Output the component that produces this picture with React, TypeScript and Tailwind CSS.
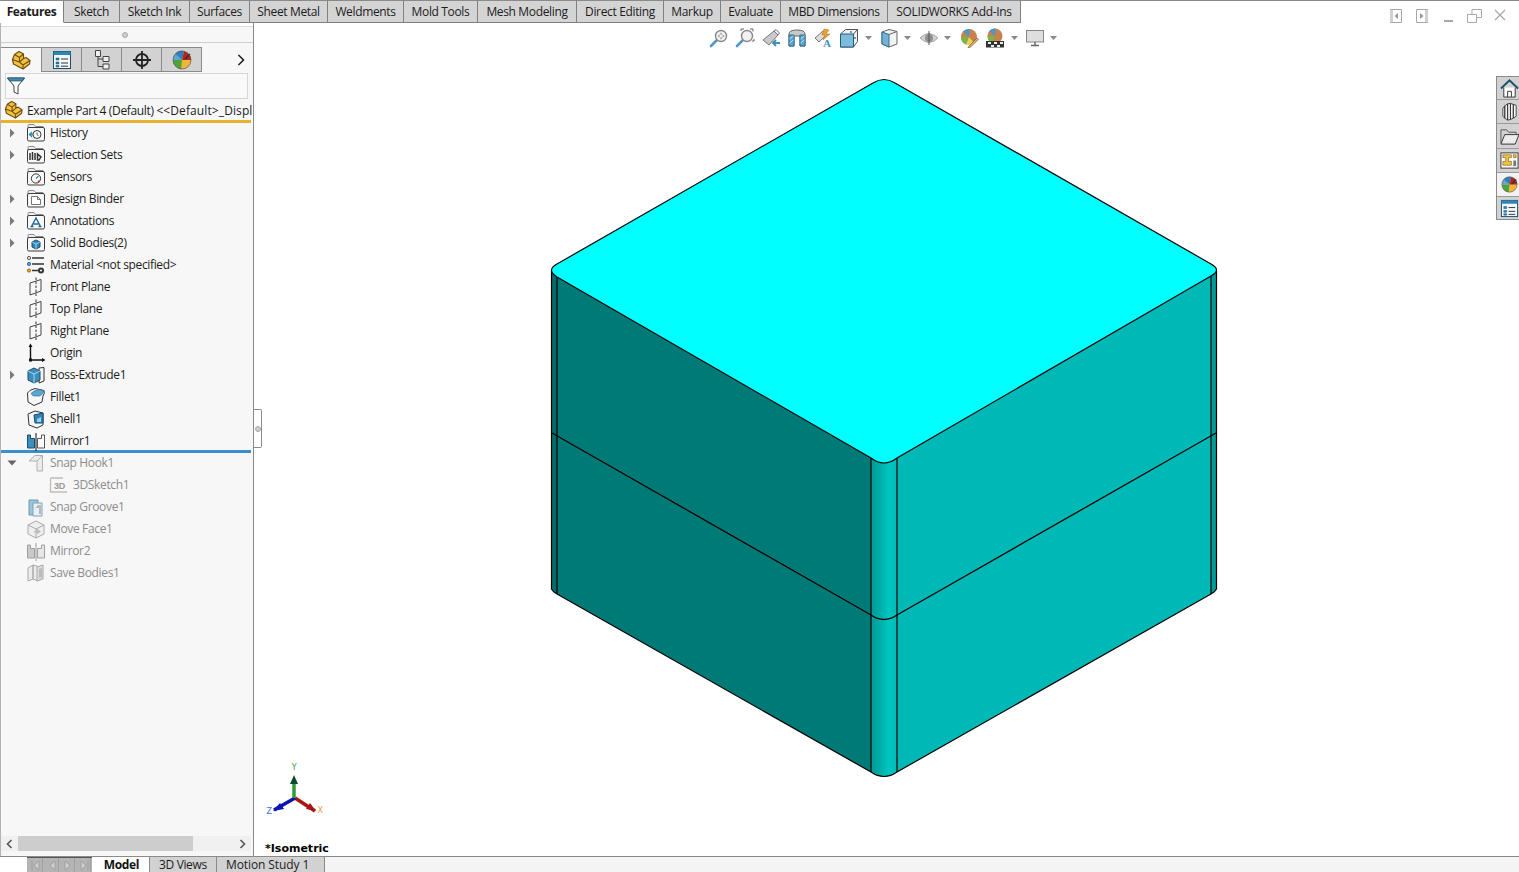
import type { ReactNode } from "react"

const ribbonTabs = [
  { label: "Features", cls: "w-[64px] bg-white font-bold border-b-white" },
  { label: "Sketch", cls: "w-[56px]" },
  { label: "Sketch Ink", cls: "w-[70px]" },
  { label: "Surfaces", cls: "w-[60px]" },
  { label: "Sheet Metal", cls: "w-[78px]" },
  { label: "Weldments", cls: "w-[76px]" },
  { label: "Mold Tools", cls: "w-[74px]" },
  { label: "Mesh Modeling", cls: "w-[99px]" },
  { label: "Direct Editing", cls: "w-[87px]" },
  { label: "Markup", cls: "w-[57px]" },
  { label: "Evaluate", cls: "w-[60px]" },
  { label: "MBD Dimensions", cls: "w-[107px]" },
  { label: "SOLIDWORKS Add-Ins", cls: "w-[133px]" },
]

function Svg({ size = 20, box = 20, children }: { size?: number; box?: number; children: ReactNode }) {
  return (
    <svg width={size} height={size} viewBox={`0 0 ${box} ${box}`} className="shrink-0 block">
      {children}
    </svg>
  )
}

function PartIcon({ size = 20 }: { size?: number }) {
  return (
    <Svg size={size}>
      <path d="M1.5 9.5 L3.5 4.5 L8 1.5 L12.5 4 L12.5 8.5 L15 7.5 L19 10.5 L18.5 14 L12 19 L2.5 14 Z" fill="#f7c23c" stroke="#6b4e12" strokeWidth="1.2" strokeLinejoin="round" />
      <path d="M3.5 4.5 L8.5 7.5 L12.5 4 M8.5 7.5 L8.5 12 M1.5 9.5 L8.5 12 L12.5 8.5 M8.5 12 L12 15 L19 10.5 M12 15 L12 19" fill="none" stroke="#6b4e12" strokeWidth="1.1" />
    </Svg>
  )
}

function Ball({ size = 20 }: { size?: number }) {
  return (
    <Svg size={size}>
      <circle cx="10" cy="10" r="9" fill="#f0b63a" />
      <path d="M10 10 L3 4 A9 9 0 0 1 12 1.2 Z" fill="#2f7fc4" />
      <path d="M10 10 L12 1.2 A9 9 0 0 1 19 10 Z" fill="#b5241c" />
      <path d="M10 10 L1 10 A9 9 0 0 0 9 19 Z" fill="#4ea33a" />
      <path d="M10 10 L3 4 A9 9 0 0 0 1 10 Z" fill="#5da6d8" />
      <path d="M13 9 L18 4" stroke="#333" strokeWidth="1.6" />
      <circle cx="10" cy="10" r="9" fill="none" stroke="#555" strokeWidth="0.7" />
    </Svg>
  )
}

function ListWindow({ size = 20 }: { size?: number }) {
  return (
    <Svg size={size}>
      <rect x="1.5" y="1.5" width="17" height="17" fill="#f4f8fb" stroke="#174f6e" />
      <rect x="1.5" y="1.5" width="17" height="3.5" fill="#2d87b5" />
      <path d="M4 8h3v2h-3z M4 12h3v2h-3z M4 15.5h3v1.5h-3z" fill="#2d87b5" stroke="#174f6e" strokeWidth="0.5" />
      <path d="M9 9h7 M9 13h7 M9 16.2h7" stroke="#333" />
    </Svg>
  )
}

function ConfigIcon() {
  return (
    <Svg>
      <path d="M3.5 0.5h5v6h-5z M11 6.5h6v5h-6z M11 14h6v5h-6z" fill="#efefef" stroke="#444" />
      <path d="M6 6.5V16.5h5 M6 9h5" fill="none" stroke="#444" />
    </Svg>
  )
}

function TargetIcon() {
  return (
    <Svg>
      <circle cx="10" cy="10" r="6" fill="none" stroke="#222" strokeWidth="1.8" />
      <path d="M10 1v18 M1 10h18" stroke="#222" strokeWidth="1.8" />
    </Svg>
  )
}

function Folder({ children }: { children?: ReactNode }) {
  return (
    <svg width="20" height="18" viewBox="0 0 20 18" className="shrink-0 block">
      <path d="M2 4V1.8Q2 0.5 3 0.5h5l1.5 2H17V4" fill="#eee" stroke="#8a8a8a" />
      <rect x="1.5" y="3.5" width="17" height="13.5" rx="1.5" fill="#f8f8f8" stroke="#3c3c3c" />
      {children}
    </svg>
  )
}

const historyGlyph = (
  <>
    <circle cx="11" cy="10.5" r="4" fill="#fff" stroke="#333" />
    <path d="M11 8.5v2.2l1.6 1" fill="none" stroke="#333" strokeWidth="0.8" />
    <path d="M3.5 10.5h3.5" stroke="#2f86bd" strokeWidth="2" />
    <path d="M6 8l-2.5 2.5L6 13" fill="none" stroke="#2f86bd" strokeWidth="1.2" />
  </>
)
const setsGlyph = (
  <path d="M4 14V7M6.5 14V6M9 14V7M11.5 14V8L15 11l-2 3z" fill="none" stroke="#333" strokeWidth="1.5" />
)
const sensorGlyph = (
  <>
    <circle cx="10" cy="10.5" r="4.6" fill="#fff" stroke="#333" />
    <path d="M10 10.5l2.5-2.5" stroke="#2f86bd" strokeWidth="1.3" />
    <path d="M13.5 12.5l-1.5 2" stroke="#d02a20" strokeWidth="1.5" />
  </>
)
const binderGlyph = <path d="M5.5 6.5h6l3 3v5h-9z M11.5 6.5v3h3" fill="#fff" stroke="#777" />
const annoGlyph = <path d="M5.5 14.5L10 6l4.5 8.5M7.5 12h5M4.5 14.5h3M12.5 14.5h3" fill="none" stroke="#23689a" strokeWidth="1.4" />
const bodiesGlyph = (
  <>
    <path d="M10 6l4 2v5l-4 2-4-2V8z" fill="#2f86bd" stroke="#174f6e" />
    <path d="M6 8l4 2 4-2M10 10v5" fill="none" stroke="#bfe0f2" strokeWidth="0.8" />
  </>
)

function MaterialIcon() {
  return (
    <Svg>
      <circle cx="3" cy="3" r="1.6" fill="#eee" stroke="#555" />
      <circle cx="3" cy="9" r="1.6" fill="#5aa4d6" stroke="#2f6d97" />
      <circle cx="3" cy="15.5" r="1.6" fill="#f0a62c" stroke="#9b6a12" />
      <path d="M6 3h12 M6 9h12 M6 15.5h6" stroke="#333" strokeWidth="1.5" />
      <circle cx="15" cy="15.5" r="3" fill="#333" />
      <circle cx="15" cy="15.5" r="1" fill="#fff" />
    </Svg>
  )
}

function PlaneIcon() {
  return (
    <Svg>
      <path d="M4 6L15 2.5V14L4 18z" fill="none" stroke="#444" />
      <path d="M10 0.5V20" stroke="#333" strokeDasharray="2.5 1.5" />
    </Svg>
  )
}

function OriginIcon() {
  return (
    <Svg>
      <path d="M4.5 3V17H18" fill="none" stroke="#111" strokeWidth="1.4" />
      <path d="M4.5 0.5L2.5 4h4z M19.5 17L16 15v4z" fill="#111" />
      <rect x="3" y="15.5" width="3" height="3" fill="#111" />
    </Svg>
  )
}

function BossIcon() {
  return (
    <Svg>
      <path d="M13 3l5-0.5V16l-5 2z" fill="#f4f4f4" stroke="#333" />
      <path d="M2 6l6-3 6 3v9l-6 3-6-3z" fill="#3d8dbf" stroke="#174f6e" />
      <path d="M2 6l6 3 6-3M8 9v9" fill="none" stroke="#a8d4ec" />
    </Svg>
  )
}

function FilletIcon() {
  return (
    <Svg>
      <path d="M1.5 6Q3 3 9 1.5L18 3.5Q19 6 17 9L16 15L8 18.5L2 15z" fill="#f7f7f7" stroke="#333" />
      <path d="M5 6.5Q8 3 13 2.5L18 4Q17 7 14 9L8 9Q6 8.5 5 6.5z" fill="#5ca6d2" stroke="#2a6f99" strokeWidth="0.6" />
    </Svg>
  )
}

function ShellIcon() {
  return (
    <Svg>
      <path d="M2 5l7-3 8 2v12l-6 3-8-3z" fill="#f7f7f7" stroke="#333" />
      <path d="M8 6l9-2v10l-8 0z" fill="#2f86bd" stroke="#174f6e" />
      <path d="M11 10l4-2v5h-4z" fill="#9dcfe9" />
    </Svg>
  )
}

function MirrorIcon({ muted }: { muted?: boolean }) {
  const body = muted ? "#c9c9c9" : "#3d8dbf"
  const line = muted ? "#a0a0a0" : "#174f6e"
  return (
    <Svg>
      <path d="M1.5 4h3v3.5h4V17h-7z" fill={body} stroke={line} />
      <path d="M18.5 4h-3v3.5h-4V17h7z" fill={muted ? "#e6e6e6" : "#fafafa"} stroke={muted ? "#a0a0a0" : "#555"} />
      <path d="M10 2v18" stroke={muted ? "#999" : "#111"} />
    </Svg>
  )
}

function SnapHookIcon() {
  return (
    <Svg>
      <path d="M3 8L9 2.5h7.5V18H11V8H7z" fill="#ececec" stroke="#b0b0b0" />
      <path d="M11 8l5.5-5.5" stroke="#b0b0b0" />
    </Svg>
  )
}

function SketchIcon() {
  return (
    <svg width="22" height="18" viewBox="0 0 22 18" className="shrink-0 block">
      <path d="M14 2H2.5Q1.5 2 1.5 3V16H18" fill="none" stroke="#bdbdbd" strokeWidth="1.3" />
      <text x="5" y="12.5" fontSize="9" fontWeight="700" fill="#9a9a9a" fontFamily="Liberation Sans">3D</text>
    </svg>
  )
}

function GrooveIcon() {
  return (
    <Svg>
      <path d="M3 3h9v15H3z" fill="#9cc3d8" stroke="#6b99b3" />
      <path d="M7 6h9v13H7z" fill="#e9f0f4" stroke="#7aa3ba" />
      <path d="M9 11l3-3h3v9h-2v-6z" fill="#b8b8b8" />
    </Svg>
  )
}

function MoveFaceIcon() {
  return (
    <Svg>
      <path d="M2 6l8-4 8 4v9l-8 4-8-4z" fill="#efefef" stroke="#aaa" />
      <path d="M2 6l8 4 8-4M10 10v9" fill="none" stroke="#aaa" />
      <path d="M7 13l4-2v-1.5l4 3-4 3V14z" fill="#bdbdbd" />
    </Svg>
  )
}

function SaveBodiesIcon() {
  return (
    <Svg>
      <path d="M2 5l5-3v14l-5 2z M7 2l5 1.5V18l-5-2z" fill="#ececec" stroke="#aaa" />
      <path d="M11 4l6-2v14l-6 2z" fill="#dcdcdc" stroke="#aaa" />
      <path d="M13 6l3-1v9l-3 1z" fill="#bcbcbc" />
    </Svg>
  )
}

const arrowRight = (
  <svg width="6" height="10" viewBox="0 0 6 10" className="block">
    <path d="M1 0.5L5.5 5L1 9.5z" fill="#7a7a7a" />
  </svg>
)
const arrowDown = (
  <svg width="10" height="6" viewBox="0 0 10 6" className="block">
    <path d="M0.5 0.5h9L5 5.5z" fill="#666" />
  </svg>
)

type Row = { label: string; icon: ReactNode; arrow?: "right" | "down"; muted?: boolean; indent?: boolean }

const rows: Row[] = [
  { label: "History", arrow: "right", icon: <Folder>{historyGlyph}</Folder> },
  { label: "Selection Sets", arrow: "right", icon: <Folder>{setsGlyph}</Folder> },
  { label: "Sensors", icon: <Folder>{sensorGlyph}</Folder> },
  { label: "Design Binder", arrow: "right", icon: <Folder>{binderGlyph}</Folder> },
  { label: "Annotations", arrow: "right", icon: <Folder>{annoGlyph}</Folder> },
  { label: "Solid Bodies(2)", arrow: "right", icon: <Folder>{bodiesGlyph}</Folder> },
  { label: "Material <not specified>", icon: <MaterialIcon /> },
  { label: "Front Plane", icon: <PlaneIcon /> },
  { label: "Top Plane", icon: <PlaneIcon /> },
  { label: "Right Plane", icon: <PlaneIcon /> },
  { label: "Origin", icon: <OriginIcon /> },
  { label: "Boss-Extrude1", arrow: "right", icon: <BossIcon /> },
  { label: "Fillet1", icon: <FilletIcon /> },
  { label: "Shell1", icon: <ShellIcon /> },
  { label: "Mirror1", icon: <MirrorIcon /> },
  { label: "Snap Hook1", arrow: "down", muted: true, icon: <SnapHookIcon /> },
  { label: "3DSketch1", muted: true, indent: true, icon: <SketchIcon /> },
  { label: "Snap Groove1", muted: true, icon: <GrooveIcon /> },
  { label: "Move Face1", muted: true, icon: <MoveFaceIcon /> },
  { label: "Mirror2", muted: true, icon: <MirrorIcon muted /> },
  { label: "Save Bodies1", muted: true, icon: <SaveBodiesIcon /> },
]

function TreeRow({ row }: { row: Row }) {
  return (
    <div className="flex h-[22px] items-center">
      <div className="flex w-[25px] shrink-0 items-center pl-[8px]">
        {row.arrow === "right" && arrowRight}
        {row.arrow === "down" && <span className="-ml-[2px]">{arrowDown}</span>}
      </div>
      {row.indent && <div className="w-[23px] shrink-0" />}
      <div className="w-[24px] shrink-0">{row.icon}</div>
      <span className={row.muted ? "whitespace-nowrap text-[#8c8c8c]" : "whitespace-nowrap text-[#1c1c1c]"}>{row.label}</span>
    </div>
  )
}

function FeatureTree() {
  return (
    <aside className="flex w-[254px] shrink-0 flex-col border-l border-r border-l-[#b4b4b4] border-r-[#8a8a8a] bg-[#f7f7f7]">
      <div className="h-[4px] border-b border-[#dcdcdc] bg-white" />
      <div className="flex h-[16px] items-center justify-center border-b border-[#cfcfcf] pr-[4px]">
        <span className="size-[6px] rounded-full border border-[#a8a8a8] bg-[#cfcfcf]" />
      </div>
      <div className="mt-[4px] flex h-[25px] items-stretch">
        <div className="flex w-[41px] items-center justify-center border-t border-r border-[#8a8a8a] bg-[#f7f7f7]">
          <PartIcon />
        </div>
        {[<ListWindow key="a" />, <ConfigIcon key="b" />, <TargetIcon key="c" />, <Ball key="d" />].map((icon, i) => (
          <div key={i} className="flex w-[40px] items-center justify-center border-t border-r border-b border-[#8a8a8a] bg-[#d2d2d2]">
            {icon}
          </div>
        ))}
        <div className="flex flex-1 items-center justify-end pr-[8px]">
          <svg width="8" height="12" viewBox="0 0 8 12">
            <path d="M1.5 1L6.5 6L1.5 11" fill="none" stroke="#222" strokeWidth="1.6" />
          </svg>
        </div>
      </div>
      <div className="ml-[4px] mt-px flex h-[26px] w-[243px] items-center border border-[#d6d6d6] bg-[#f9f9f9]">
        <svg width="20" height="20" viewBox="0 0 20 20" className="block">
          <path d="M1.5 2h17l-6.5 8v8l-4 -2V10z" fill="#fff" stroke="#444" />
          <path d="M1.5 2h17l-2 3H3.5z" fill="#3f8fbd" stroke="#174f6e" strokeWidth="0.7" />
        </svg>
      </div>
      <div className="flex h-[21px] items-center overflow-hidden whitespace-nowrap pl-[3px] pt-[2px] text-[#1c1c1c]">
        <div className="mr-[4px] -mt-[2px]"><PartIcon size={19} /></div>
        <span>Example Part 4 (Default) <span className="tracking-[0.1px]">&lt;&lt;Default&gt;_Displ</span></span>
      </div>
      <div className="mr-[2px] h-[3px] bg-[#e8b22e]" />
      <div className="-mt-px flex-1 overflow-hidden">
        {rows.map((row) => (
          <div key={row.label}>
            <TreeRow row={row} />
            {row.label === "Mirror1" && <div className="mr-[2px] -mb-[1px] -mt-[2px] h-[3px] bg-[#3b8fcb]" />}
          </div>
        ))}
      </div>
      <div className="flex h-[15px] items-center bg-[#f0f0f0] mr-[2px]">
        <div className="flex w-[17px] justify-center">
          <svg width="7" height="10" viewBox="0 0 7 10"><path d="M5.5 1L1.5 5l4 4" fill="none" stroke="#555" strokeWidth="1.6" /></svg>
        </div>
        <div className="h-full w-[175px] bg-[#cdcdcd]" />
        <div className="flex flex-1 justify-end pr-[5px]">
          <svg width="7" height="10" viewBox="0 0 7 10"><path d="M1.5 1l4 4-4 4" fill="none" stroke="#555" strokeWidth="1.6" /></svg>
        </div>
      </div>
      <div className="h-[5px]" />
    </aside>
  )
}

function Caret({ cls }: { cls: string }) {
  return (
    <svg width="7" height="4" viewBox="0 0 7 4" className={`block shrink-0 ${cls}`}>
      <path d="M0 0h7L3.5 4z" fill="#8a8a8a" />
    </svg>
  )
}

function Magnifier({ children }: { children?: ReactNode }) {
  return (
    <Svg>
      <path d="M2 18l6-6" stroke="#4f9ac6" strokeWidth="2.6" strokeLinecap="round" />
      <circle cx="12" cy="8" r="5.5" fill="#f1f1f1" stroke="#888" strokeWidth="1.4" />
      {children}
    </Svg>
  )
}

function HeadsUpToolbar() {
  return (
    <div className="absolute left-[452px] top-[5px] flex h-[20px] items-center">
      <div className="flex w-[26px] justify-center">
        <Magnifier><path d="M12 4.5l1.5 2h-3z M12 11.5l1.5-2h-3z M8.5 8l2-1.5v3z M15.5 8l-2-1.5v3z" fill="#999" /></Magnifier>
      </div>
      <div className="flex w-[26px] justify-center">
        <Magnifier><path d="M6 3V1h3 M15 1h3v2.5 M19 11v2h-2" fill="none" stroke="#666" /></Magnifier>
      </div>
      <div className="flex w-[26px] justify-center">
        <Svg>
          <path d="M2 12l11-9 4 4-9 10z" fill="#c9c9c9" stroke="#777" />
          <path d="M13 3l4 4 1.5-2-3.5-3.5z" fill="#eee" stroke="#777" />
          <path d="M19 15h-7M15 12l-3 3 3 3" fill="none" stroke="#3f8fbd" strokeWidth="1.8" />
        </Svg>
      </div>
      <div className="flex w-[26px] justify-center">
        <Svg>
          <path d="M2 6Q2 2 10 2t8 4v12h-5V8H7v10H2z" fill="#c9c9c9" stroke="#666" />
          <path d="M2 7h5v11H2z M13 7h5v11h-5z" fill="#5da6d0" stroke="#2c6f95" />
          <path d="M2.5 11l4-3 M2.5 15l4-3 M13.5 11l4-3 M13.5 15l4-3" stroke="#d8ecf7" strokeWidth="0.8" />
        </Svg>
      </div>
      <div className="flex w-[26px] justify-center">
        <Svg>
          <path d="M2 10l8-7 3 4-7 7z" fill="#dcdcdc" stroke="#777" />
          <path d="M11 1l5 1-3 4 4 0-7 6 2-5h-3z" fill="#e9a431" stroke="#a86f14" strokeWidth="0.5" />
          <text x="10" y="19" fontSize="11" fontWeight="700" fill="#3f8fbd" fontFamily="Liberation Serif">A</text>
        </Svg>
      </div>
      <div className="flex w-[26px] justify-center">
        <Svg>
          <path d="M6.5 1.5h12v12l-4 5.5h-13V6z" fill="#f2f2f2" stroke="#555" />
          <path d="M1.5 6h13v13h-13z" fill="#7fbcdc" stroke="#1f5f85" />
          <path d="M14.5 6l4-4.5" stroke="#555" />
          <path d="M12 3v2M16 9v2" stroke="#333" />
        </Svg>
      </div>
      <Caret cls="ml-[3px]" />
      <div className="ml-[7px] flex w-[22px] justify-center">
        <Svg>
          <path d="M2 4l7-2.5 8 2V16l-8 3-7-3z" fill="#f2f2f2" stroke="#666" />
          <path d="M2 4l7 2.5V19l-7-3z" fill="#74b3d6" stroke="#2c6f95" />
          <path d="M9 6.5l8-3" stroke="#666" />
        </Svg>
      </div>
      <Caret cls="ml-[3px]" />
      <div className="ml-[7px] flex w-[22px] justify-center">
        <Svg>
          <path d="M1 10Q10 1 19 10Q10 19 1 10z" fill="#d0d0d0" stroke="#aaa" />
          <circle cx="10" cy="10" r="4" fill="#8f8f8f" />
          <path d="M10 3v14" stroke="#555" />
        </Svg>
      </div>
      <Caret cls="ml-[4px]" />
      <div className="ml-[5px] flex w-[26px] justify-center">
        <Svg>
          <circle cx="10" cy="9" r="8" fill="#c9824a" />
          <path d="M10 9L4 3.5A8 8 0 0 1 11 1z" fill="#4f95cc" />
          <path d="M10 9H2A8 8 0 0 0 7 16.5z" fill="#7bb54a" />
          <path d="M10 9L7 16.5A8 8 0 0 0 15 15z" fill="#e8d25a" />
          <path d="M10 18l8-8 1.5 1.5-8 7.5L9 20z" fill="#e9b04a" stroke="#555" strokeWidth="0.6" />
        </Svg>
      </div>
      <div className="flex w-[26px] justify-center">
        <Svg>
          <circle cx="10" cy="8" r="7.5" fill="#c9824a" />
          <path d="M10 8L4 3A7.5 7.5 0 0 1 11 .6z" fill="#4f95cc" />
          <path d="M10 8H2.5A7.5 7.5 0 0 0 7 15z" fill="#7bb54a" />
          <path d="M1 13h18v6.5H1z" fill="#333" />
          <path d="M3 14h3v2H3z M9 14h3v2H9z M15 14h3v2h-3z M6 17h3v2H6z M12 17h3v2h-3z" fill="#eee" />
        </Svg>
      </div>
      <Caret cls="ml-[3px]" />
      <div className="ml-[6px] flex w-[22px] justify-center">
        <Svg>
          <rect x="1.5" y="2.5" width="17" height="11.5" fill="#dedede" stroke="#888" />
          <path d="M10 14v3M6 17.5h8" stroke="#666" strokeWidth="1.5" />
        </Svg>
      </div>
      <Caret cls="ml-[4px]" />
    </div>
  )
}

const sideTabs = [
  {
    h: "h-[23px]",
    icon: (
      <Svg size={19}>
        <path d="M1 10L10 1.5 19 10" fill="none" stroke="#174f6e" strokeWidth="2" />
        <path d="M4 9v10h12V9" fill="#fff" stroke="#333" />
        <path d="M8 19v-6h4v6" fill="none" stroke="#333" />
      </Svg>
    ),
  },
  {
    h: "h-[24px]",
    icon: (
      <Svg size={19}>
        <path d="M3 7l2-3v13l-2-2z M5 4l3-2v17l-3-2z M8 2l3-0.5V18.5L8 19z M11 1.5l3 1V17l-3 1.5z M14 2.5l3 1V15l-3 2z" fill="#f5f5f5" stroke="#333" strokeWidth="0.9" />
      </Svg>
    ),
  },
  {
    h: "h-[25px]",
    icon: (
      <Svg size={19}>
        <path d="M1 17V3h6l2 2.5h8V8" fill="none" stroke="#555" />
        <path d="M1 18l4-10h15l-4 10z" fill="#ececec" stroke="#333" />
      </Svg>
    ),
  },
  {
    h: "h-[24px]",
    icon: (
      <Svg size={19}>
        <rect x="1" y="2" width="18" height="16" fill="#fff" stroke="#333" />
        <path d="M3 4h9v3H9v4h3v4H3v-4h3V7H3z" fill="#f5c33b" stroke="#6b4e12" strokeWidth="0.6" />
        <path d="M14 4h3v3h-3z" fill="#f5c33b" stroke="#6b4e12" strokeWidth="0.6" />
        <path d="M14 10h3v6h-3z" fill="#777" />
      </Svg>
    ),
  },
  { h: "h-[24px] bg-[#f2f2f2]", icon: <Ball size={17} /> },
  { h: "h-[22px]", icon: <ListWindow size={19} /> },
]

function SideTabs() {
  return (
    <div className="absolute right-0 top-[53px] flex w-[23px] flex-col border-l border-t border-b border-[#8a8a8a] bg-[#d2d2d2]">
      {sideTabs.map((tab, i) => (
        <div key={i} className={`flex items-center justify-center border-b border-[#9a9a9a] pl-[2px] last:border-b-0 ${tab.h}`}>
          {tab.icon}
        </div>
      ))}
    </div>
  )
}

// the part, drawn in page coordinates
function Model() {
  return (
    <svg viewBox="254 23 1265 833" className="absolute inset-0 h-full w-full">
      <defs>
        <linearGradient id="edge" x1="0" x2="1" y1="0" y2="0">
          <stop offset="0" stopColor="#009a96" />
          <stop offset="0.3" stopColor="#00aaa6" />
          <stop offset="0.7" stopColor="#00c6c0" />
          <stop offset="1" stopColor="#00bab5" />
        </linearGradient>
      </defs>
      <path d="M557 270 L871 458 V772 L557 594 Z" fill="#007a77" />
      <path d="M1211 270 L897 458 V772 L1211 594 Z" fill="#00b8b6" />
      <path d="M551.5 270 L557 277 V594 Q553 592 551.5 589 Z" fill="#006d6a" />
      <path d="M1216.5 270 L1211 276 V594 Q1215 592 1216.5 589 Z" fill="#009c98" />
      <path d="M871 455 H897 V772 Q884 781 871 772 Z" fill="url(#edge)" />
      <path d="M557 594 L871 772 Q884 781 897 772 L1211 594 Q1215 592 1216.5 589 V270 M551.5 270 V589 Q553 592 557 594" fill="none" stroke="#000" strokeWidth="1.2" />
      <path d="M552 433 L871 615 Q884 624 897 615 L1216 433" fill="none" stroke="#000" strokeWidth="1.3" />
      <path d="M557 277 V594 M871 458 V772 M897 458 V772 M1211 276 V594" fill="none" stroke="#000" strokeWidth="1.2" />
      <path d="M873 83 Q884 76 895 83 L1211 264 Q1222 270 1211 276 L897 458 Q884 468 871 458 L557 277 Q546 270 557 264 Z" fill="#00ffff" stroke="#000" strokeWidth="1.2" />
      <path d="M295 798 L315 811" stroke="#a8140f" strokeWidth="3.5" />
      <path d="M295 798 L274 810" stroke="#0a14b0" strokeWidth="3.5" />
      <path d="M294 798 V782" stroke="#2f9a3c" strokeWidth="3.5" />
      <path d="M294 775 L298 784 H290 Z" fill="#0c4a2c" />
      <path d="M273 811 L280 803 L284 809 Z" fill="#0a14b0" />
      <path d="M316 811 L306 809 L310 803 Z" fill="#a8140f" />
      <text x="294" y="770" fontSize="8" textAnchor="middle" fill="#2f9a3c" fontFamily="DejaVu Sans">Y</text>
      <text x="320" y="813" fontSize="8" textAnchor="middle" fill="#e8964a" fontFamily="DejaVu Sans">X</text>
      <text x="269" y="814" fontSize="8" textAnchor="middle" fill="#3c6ee0" fontFamily="DejaVu Sans">Z</text>
    </svg>
  )
}

function BottomTabs() {
  return (
    <div className="flex h-[16px] shrink-0 items-stretch border-t border-[#8a8a8a] bg-[#f4f4f4]">
      <div className="w-[27px] bg-white" />
      <div className="flex w-[65px] border-t border-[#555] bg-[#b4b4b4]">
        {["M4 1v9 M11 1L6 5.5l5 4.5z", "M11 1L6 5.5l5 4.5z", "M5 1l5 4.5L5 10z", "M12 1v9 M5 1l5 4.5L5 10z"].map((d, i) => (
          <div key={i} className="flex w-[16px] items-center justify-center border-r border-[#a0a0a0]">
            <svg width="14" height="11" viewBox="0 0 14 11"><path d={d} fill="#cfcfcf" stroke="#a0a0a0" /></svg>
          </div>
        ))}
      </div>
      <div className="flex w-[57px] items-center justify-center bg-white pl-[2px] font-bold text-[#111]">Model</div>
      <div className="flex w-[68px] items-center justify-start border-l border-r border-[#8a8a8a] bg-[#d2d2d2] pl-[9px]">3D Views</div>
      <div className="flex w-[108px] items-center justify-start border-r border-[#8a8a8a] bg-[#d2d2d2] pl-[9px] tracking-[-0.1px]">Motion Study 1</div>
    </div>
  )
}

function WindowButtons() {
  return (
    <div className="ml-auto flex items-start gap-[12px] pr-[13px] pt-[8px]">
      <svg width="14" height="14" viewBox="0 0 14 14"><path d="M1.5 0.5h11v13h-11z" fill="#fff" stroke="#a8a8a8" /><path d="M1 1h3v12H1z" fill="#d0d0d0" /><path d="M9 4v6L5.5 7z" fill="#999" /></svg>
      <svg width="14" height="14" viewBox="0 0 14 14"><path d="M1.5 0.5h11v13h-11z" fill="#fff" stroke="#a8a8a8" /><path d="M10 1h3v12h-3z" fill="#d0d0d0" /><path d="M5 4v6L8.5 7z" fill="#999" /></svg>
      <svg width="14" height="14" viewBox="0 0 14 14"><path d="M3 12h9" stroke="#a8a8a8" strokeWidth="2" /></svg>
      <svg width="15" height="14" viewBox="0 0 15 14"><path d="M0.5 5.5h9v8h-9z" fill="#fff" stroke="#a8a8a8" /><path d="M5 5V0.5h9.5v8H10" fill="none" stroke="#a8a8a8" /></svg>
      <svg width="12" height="12" viewBox="0 0 12 12"><path d="M1 1l10 10M11 1L1 11" stroke="#a8a8a8" strokeWidth="1.3" /></svg>
    </div>
  )
}

export default function App() {
  return (
    <div className="flex h-screen w-full flex-col overflow-hidden bg-white font-['Open_Sans',sans-serif] text-[12px] leading-none tracking-[-0.35px] text-[#1c1c1c]">
      {/* Ribbon tabs */}
      <div className="flex h-[23px] shrink-0 border-t border-[#8a8a8a]">
        {ribbonTabs.map((tab) => (
          <div key={tab.label} className={`flex items-center justify-center whitespace-nowrap border-b border-r border-[#808080] bg-[#d4d4d4] ${tab.cls}`}>
            {tab.label}
          </div>
        ))}
        <WindowButtons />
      </div>

      <div className="flex min-h-0 flex-1">
        <FeatureTree />
        <main className="relative flex-1 overflow-hidden">
          <Model />
          <HeadsUpToolbar />
          <SideTabs />
          {/* splitter handle */}
          <div className="absolute left-0 top-[386px] flex h-[39px] w-[8px] items-center justify-center rounded-r-[2px] border border-l-0 border-[#8a8a8a] bg-white">
            <span className="size-[6px] rounded-full border border-[#a8a8a8] bg-[#cfcfcf]" />
          </div>
          <span className="absolute bottom-[2px] left-[11px] font-['DejaVu_Sans',sans-serif] text-[11px] font-bold tracking-normal text-black">*Isometric</span>
        </main>
      </div>

      <BottomTabs />
    </div>
  )
}
